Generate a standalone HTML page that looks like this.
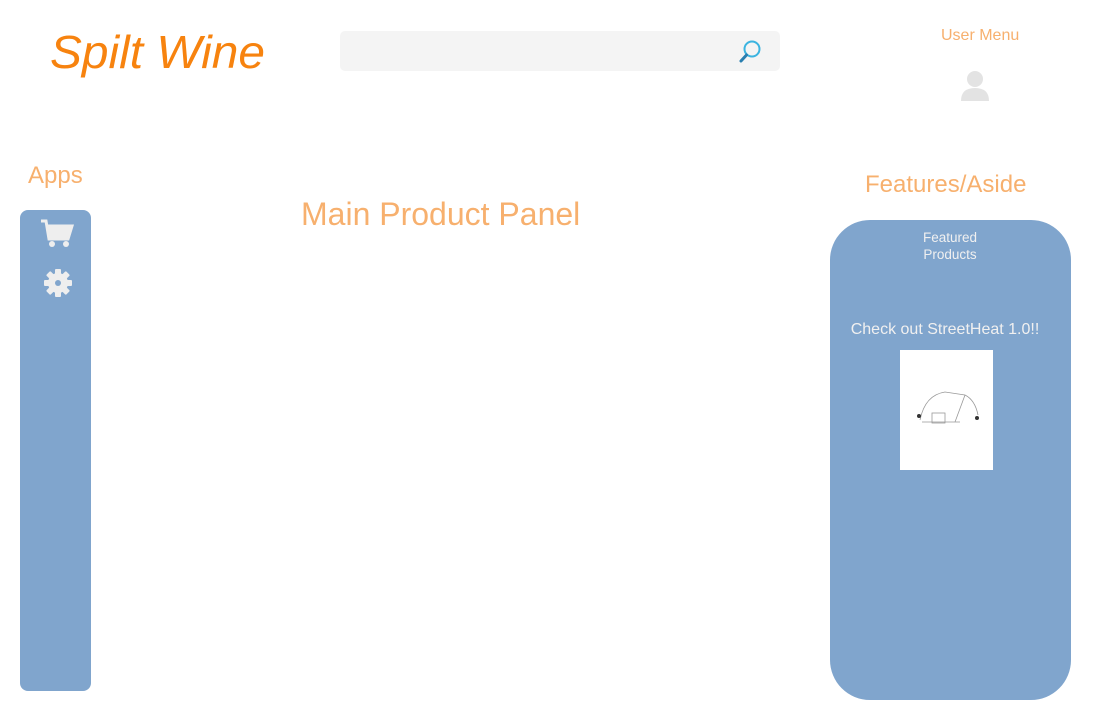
<!DOCTYPE html>
<html><head><meta charset="utf-8"><style>
body{margin:0;width:1101px;height:701px;background:#fff;position:relative;overflow:hidden;font-family:"Liberation Sans",Arial,sans-serif}
.a{position:absolute}
</style></head><body>
<div class="a" style="left:50px;top:25px;font-size:46px;font-style:italic;color:#f7830f;letter-spacing:0;transform:scaleX(1.04);transform-origin:left">Spilt Wine</div>
<div class="a" style="left:340px;top:31px;width:440px;height:40px;background:#f4f4f4;border-radius:5px"></div>
<svg class="a" style="left:737px;top:38px" width="28" height="28" viewBox="0 0 28 28"><circle cx="15" cy="11" r="7.5" fill="none" stroke="#3bb4e0" stroke-width="2"/><line x1="9.5" y1="17" x2="4" y2="23" stroke="#2a7fb0" stroke-width="3" stroke-linecap="round"/></svg>
<div class="a" style="left:941px;top:27px;font-size:16px;color:#f7b06e">User Menu</div>
<svg class="a" style="left:959px;top:69px" width="32" height="32" viewBox="0 0 32 32"><circle cx="16" cy="10" r="8" fill="#e3e3e3"/><path d="M2 32 Q2 19 16 19 Q30 19 30 32Z" fill="#e3e3e3"/></svg>
<div class="a" style="left:28px;top:162px;font-size:24px;color:#f7b06e">Apps</div>
<div class="a" style="left:20px;top:210px;width:71px;height:481px;background:#80a5cd;border-radius:8px"></div>
<svg class="a" style="left:39px;top:219px" width="36" height="30" viewBox="0 0 36 30"><path d="M2 2 H7 L10 20 H29 L33 7 H8" fill="none" stroke="#eee" stroke-width="3"/><path d="M9 7 H33 L29 19 H11Z" fill="#eee"/><circle cx="13" cy="25" r="3" fill="#eee"/><circle cx="27" cy="25" r="3" fill="#eee"/></svg>
<svg class="a" style="left:44px;top:269px" width="28" height="28" viewBox="0 0 28 28"><g fill="#eee"><circle cx="14" cy="14" r="10"/><rect x="11" y="0" width="6" height="28" rx="1"/><rect x="0" y="11" width="28" height="6" rx="1"/><rect x="11" y="0" width="6" height="28" rx="1" transform="rotate(45 14 14)"/><rect x="11" y="0" width="6" height="28" rx="1" transform="rotate(-45 14 14)"/></g><circle cx="14" cy="14" r="3" fill="#80a5cd"/></svg>
<div class="a" style="left:301px;top:196px;font-size:32px;color:#f7b06e">Main Product Panel</div>
<div class="a" style="left:865px;top:171px;font-size:24px;color:#f7b06e">Features/Aside</div>
<div class="a" style="left:830px;top:220px;width:241px;height:480px;background:#80a5cd;border-radius:40px"></div>
<div class="a" style="left:830px;top:229px;width:240px;text-align:center;font-size:13.5px;line-height:17px;color:#f0f0f0">Featured<br>Products</div>
<div class="a" style="left:825px;top:321px;width:240px;text-align:center;font-size:16px;color:#f0f0f0">Check out StreetHeat 1.0!!</div>
<div class="a" style="left:900px;top:350px;width:93px;height:120px;background:#fff"></div>
<svg class="a" style="left:900px;top:350px" width="93" height="120" viewBox="0 0 93 120"><g fill="none" stroke="#999" stroke-width="0.8"><path d="M20 70 Q25 45 45 42 L65 45 Q75 50 78 65"/><path d="M65 45 L55 72"/><path d="M22 72 L60 72"/><rect x="32" y="63" width="13" height="10"/></g><circle cx="19" cy="66" r="2" fill="#333"/><circle cx="77" cy="68" r="2" fill="#333"/></svg>
</body></html>
